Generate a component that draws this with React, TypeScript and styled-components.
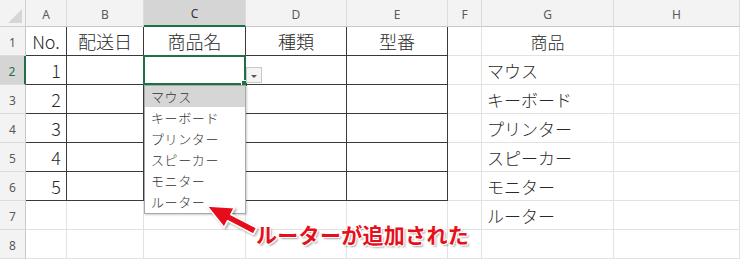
import { Fragment } from 'react';
import styled, { createGlobalStyle, css } from 'styled-components';

const GlobalStyle = createGlobalStyle`
  html, body { margin: 0; padding: 0; background: #fff; }
  body { font-family: 'Noto Sans CJK JP', 'Noto Sans', sans-serif; }
`;

const GREEN = '#1e7145';
const DARK = '#3a3a3a';
const LIGHT = '#e2e2e2';

const Sheet = styled.div`
  position: relative;
  width: 740px;
  height: 259px;
  overflow: hidden;
  background: #fff;
`;

const Grid = styled.div`
  display: grid;
  grid-template-columns: 26px 41px 77px 102px 101px 101px 34px 132px 126px;
  grid-template-rows: 27px repeat(8, 29px);
`;

const Corner = styled.div`
  background: #f3f3f3;
  border-right: 1px solid #cfcfcf;
  border-bottom: 1px solid #cfcfcf;
  position: relative;
  &::after {
    content: '';
    position: absolute;
    right: 3px;
    bottom: 3px;
    border-left: 14px solid transparent;
    border-bottom: 14px solid #d6d6d6;
  }
`;

const ColHead = styled.div<{ $active?: boolean }>`
  display: flex;
  align-items: center;
  justify-content: center;
  padding-top: 2px;
  font-size: 12px;
  color: #5a5a5a;
  font-family: 'Noto Sans', sans-serif;
  background: #f3f3f3;
  border-right: 1px solid #dcdcdc;
  border-bottom: 1px solid #c8c8c8;
  ${(p) =>
    p.$active &&
    css`
      background: #d5d5d5;
      color: #333;
      border-bottom: 2px solid ${GREEN};
    `}
`;

const RowHead = styled.div<{ $active?: boolean }>`
  display: flex;
  align-items: center;
  justify-content: center;
  padding-top: 3px;
  font-size: 12px;
  color: #5a5a5a;
  font-family: 'Noto Sans', sans-serif;
  background: #f3f3f3;
  border-right: 1px solid #c8c8c8;
  border-bottom: 1px solid #dcdcdc;
  ${(p) =>
    p.$active &&
    css`
      background: #d5d5d5;
      color: ${GREEN};
      border-right: 2px solid ${GREEN};
    `}
`;

const Cell = styled.div<{ $boxed?: boolean; $align?: 'left' | 'center' | 'right'; $size?: number }>`
  position: relative;
  display: flex;
  align-items: center;
  justify-content: ${(p) =>
    p.$align === 'right' ? 'flex-end' : p.$align === 'center' ? 'center' : 'flex-start'};
  padding: 0 5px;
  font-size: ${(p) => p.$size ?? 17}px;
  font-weight: 300;
  color: #2a2a2a;
  white-space: nowrap;
  border-right: 1px solid ${(p) => (p.$boxed ? DARK : LIGHT)};
  border-bottom: 1px solid ${(p) => (p.$boxed ? DARK : LIGHT)};
`;

const Selection = styled.div`
  position: absolute;
  left: -1px;
  top: -1px;
  right: -1px;
  bottom: -1px;
  border: 2px solid ${GREEN};
  &::after {
    content: '';
    position: absolute;
    right: -4px;
    bottom: -4px;
    width: 5px;
    height: 5px;
    background: ${GREEN};
    border: 1px solid #fff;
  }
`;

const DropButton = styled.div`
  position: absolute;
  left: 246px;
  top: 67px;
  width: 16px;
  height: 16px;
  box-sizing: border-box;
  background: #f4f4f4;
  border: 1px solid #c8c8c8;
  display: flex;
  align-items: center;
  justify-content: center;
  &::before {
    content: '';
    border-left: 3px solid transparent;
    border-right: 3px solid transparent;
    border-top: 3px solid #555;
    margin-top: 2px;
  }
`;

const DropList = styled.ul`
  position: absolute;
  left: 144px;
  top: 85px;
  width: 102px;
  height: 129px;
  box-sizing: border-box;
  margin: 0;
  padding: 0;
  list-style: none;
  background: #fff;
  border: 1px solid #a8a8a8;
  box-shadow: 1px 1px 2px rgba(0, 0, 0, 0.2);
`;

const DropItem = styled.li<{ $hover?: boolean }>`
  height: 21px;
  line-height: 21px;
  padding-left: 6px;
  font-size: 13px;
  font-weight: 300;
  letter-spacing: 0.6px;
  color: #333;
  background: ${(p) => (p.$hover ? '#d6d6d6' : 'transparent')};
`;

const Overlay = styled.svg`
  position: absolute;
  left: 0;
  top: 0;
  pointer-events: none;
`;

const Callout = styled.div`
  position: absolute;
  left: 256px;
  top: 219px;
  font-size: 21px;
  font-weight: 700;
  letter-spacing: 0.3px;
  color: #e5101c;
  white-space: nowrap;
  text-shadow: -1px -1px 0 #fff, 1px -1px 0 #fff, -1px 1px 0 #fff, 1px 1px 0 #fff,
    2px 2px 2px rgba(0, 0, 0, 0.35);
`;

const cols = ['A', 'B', 'C', 'D', 'E', 'F', 'G', 'H'];
const header = ['No.', '配送日', '商品名', '種類', '型番'];
const goods = ['マウス', 'キーボード', 'プリンター', 'スピーカー', 'モニター', 'ルーター'];

function App() {
  const rows = [1, 2, 3, 4, 5, 6, 7, 8];
  return (
    <>
      <GlobalStyle />
      <Sheet>
        <Grid>
          <Corner />
          {cols.map((c) => (
            <ColHead key={c} $active={c === 'C'}>
              {c}
            </ColHead>
          ))}
          {rows.map((r) => (
            <Fragment key={r}>
              <RowHead $active={r === 2}>{r}</RowHead>
              {cols.map((c, ci) => {
                const boxed = r <= 6 && ci <= 4;
                let text = '';
                let align: 'left' | 'center' | 'right' = 'left';
                let size = 17;
                if (r === 1 && ci <= 4) {
                  text = header[ci];
                  align = 'center';
                  size = 18;
                } else if (ci === 0 && r >= 2 && r <= 6) {
                  text = String(r - 1);
                  align = 'right';
                  size = 18;
                } else if (c === 'G' && r === 1) {
                  text = '商品';
                  align = 'center';
                } else if (c === 'G' && r >= 2 && r <= 7) {
                  text = goods[r - 2];
                }
                return (
                  <Cell key={c} $boxed={boxed} $align={align} $size={size}>
                    {text}
                    {c === 'C' && r === 2 && <Selection />}
                  </Cell>
                );
              })}
            </Fragment>
          ))}
        </Grid>

        <DropButton />
        <DropList>
          {goods.map((g, i) => (
            <DropItem key={g} $hover={i === 0}>
              {g}
            </DropItem>
          ))}
        </DropList>

        <Overlay width="740" height="259" viewBox="0 0 740 259">
          <defs>
            <filter id="sh" x="-20%" y="-20%" width="140%" height="140%">
              <feDropShadow dx="1.5" dy="1.5" stdDeviation="1" floodColor="#000" floodOpacity="0.35" />
            </filter>
          </defs>
          <polygon
            points="207,206 234.3,207.8 230.8,214.5 256.6,227.9 253.4,234.1 227.6,220.7 224.1,227.4"
            fill="#e5101c"
            stroke="#fff"
            strokeWidth="1.5"
            strokeLinejoin="round"
            filter="url(#sh)"
          />
        </Overlay>
        <Callout>ルーターが追加された</Callout>
      </Sheet>
    </>
  );
}

export default App;
